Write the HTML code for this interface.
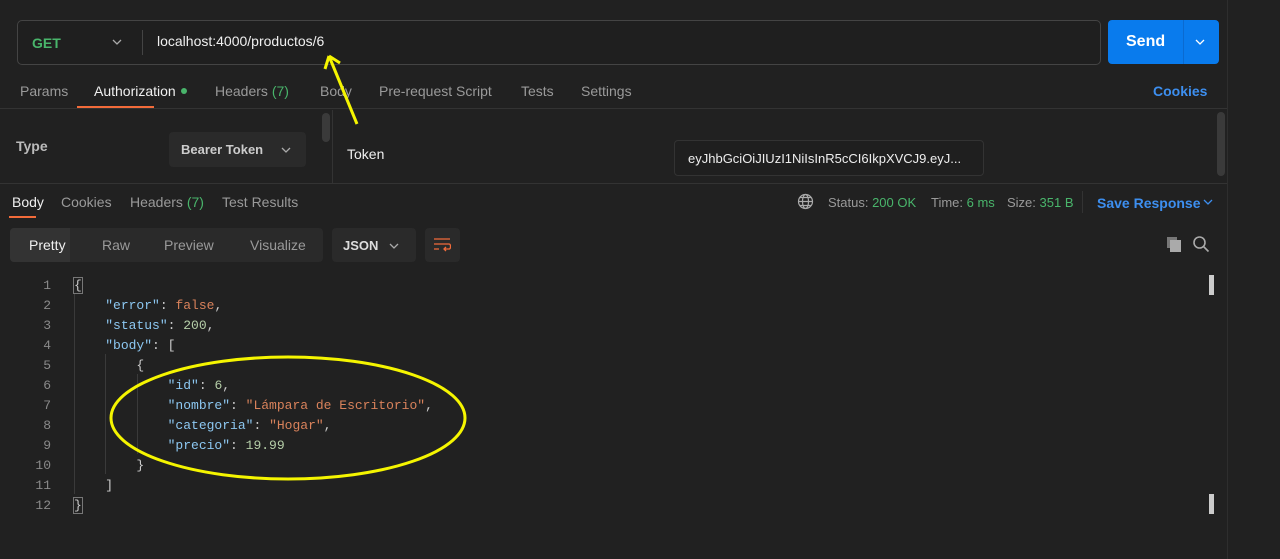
<!DOCTYPE html>
<html><head><meta charset="utf-8"><style>
*{margin:0;padding:0;box-sizing:border-box}
body{width:1280px;height:559px;background:#212121;font-family:"Liberation Sans",sans-serif;color:#e6e6e6;position:relative;overflow:hidden;font-size:13px}
.a{position:absolute;white-space:nowrap}
.g{color:#9a9a9a}
.gr{color:#49b56b}
.bl{color:#3d8ff0}
.code{font-family:"Liberation Mono",monospace;font-size:13px}
.k{color:#8dc8f2}.s{color:#d9825b}.n{color:#b5cea8}.f{color:#d9825b}.p{color:#ccc}
</style></head><body>
<div class="a" style="left:1227px;top:0;width:1px;height:559px;background:#2e2e2e"></div>
<!-- URL bar -->
<div class="a" style="left:17px;top:20px;width:1084px;height:45px;border:1px solid #444;border-radius:5px;background:#1f1f1f"></div>
<div class="a" style="left:32px;top:35px;color:#49b56b;font-weight:bold;font-size:14px">GET</div>
<svg class="a" style="left:111px;top:38px" width="12" height="8"><path d="M2 2l4 4 4-4" stroke="#aaa" fill="none" stroke-width="1.3"/></svg>
<div class="a" style="left:142px;top:30px;width:1px;height:25px;background:#444"></div>
<div class="a" style="left:157px;top:33px;font-size:14px;color:#f0f0f0">localhost:4000/productos/6</div>
<div class="a" style="left:1108px;top:20px;width:111px;height:44px;background:#097bed;border-radius:4px"></div>
<div class="a" style="left:1183px;top:20px;width:1px;height:44px;background:#0a6ad0"></div>
<div class="a" style="left:1126px;top:33px;font-size:16px;font-weight:bold;color:#fff">Send</div>
<svg class="a" style="left:1194px;top:38px" width="12" height="8"><path d="M2 2l4 4 4-4" stroke="#fff" fill="none" stroke-width="1.3"/></svg>
<!-- tabs -->
<div class="a g" style="left:20px;top:83px;font-size:14px">Params</div>
<div class="a" style="left:94px;top:83px;font-size:14px;color:#f0f0f0">Authorization</div>
<div class="a" style="left:181px;top:88px;width:6px;height:6px;border-radius:50%;background:#49b56b"></div>
<div class="a" style="left:77px;top:106px;width:77px;height:2px;background:#f26b3a;left:77px"></div>
<div class="a g" style="left:215px;top:83px;font-size:14px">Headers <span class="gr">(7)</span></div>
<div class="a g" style="left:320px;top:83px;font-size:14px">Body</div>
<div class="a g" style="left:379px;top:83px;font-size:14px">Pre-request Script</div>
<div class="a g" style="left:521px;top:83px;font-size:14px">Tests</div>
<div class="a g" style="left:581px;top:83px;font-size:14px">Settings</div>
<div class="a bl" style="left:1153px;top:83px;font-size:14px;font-weight:bold">Cookies</div>
<div class="a" style="left:0;top:108px;width:1227px;height:1px;background:#333"></div>
<!-- auth -->
<div class="a" style="left:16px;top:138px;font-size:14px;font-weight:bold;color:#bbb">Type</div>
<div class="a" style="left:169px;top:132px;width:137px;height:35px;background:#2a2a2a;border-radius:4px"></div>
<div class="a" style="left:181px;top:142px;color:#ccc;font-weight:bold">Bearer Token</div>
<svg class="a" style="left:280px;top:146px" width="12" height="8"><path d="M2 2l4 4 4-4" stroke="#aaa" fill="none" stroke-width="1.3"/></svg>
<div class="a" style="left:322px;top:113px;width:8px;height:29px;background:#3a3a3a;border-radius:4px"></div>
<div class="a" style="left:332px;top:110px;width:1px;height:73px;background:#333"></div>
<div class="a" style="left:347px;top:146px;font-size:14px;color:#f0f0f0">Token</div>
<div class="a" style="left:674px;top:140px;width:310px;height:36px;border:1px solid #333;border-radius:4px;background:#1f1f1f"></div>
<div class="a" style="left:688px;top:151px;color:#eee">eyJhbGciOiJIUzI1NiIsInR5cCI6IkpXVCJ9.eyJ...</div>
<div class="a" style="left:1217px;top:112px;width:8px;height:64px;background:#3a3a3a;border-radius:4px"></div>
<div class="a" style="left:0;top:183px;width:1227px;height:1px;background:#333"></div>
<!-- response tabs -->
<div class="a" style="left:12px;top:194px;font-size:14px;color:#f0f0f0">Body</div>
<div class="a" style="left:9px;top:216px;width:27px;height:2px;background:#f26b3a"></div>
<div class="a g" style="left:61px;top:194px;font-size:14px">Cookies</div>
<div class="a g" style="left:130px;top:194px;font-size:14px">Headers <span class="gr">(7)</span></div>
<div class="a g" style="left:222px;top:194px;font-size:14px">Test Results</div>
<svg class="a" style="left:797px;top:193px" width="17" height="17" fill="none" stroke="#aaa" stroke-width="1.2"><circle cx="8.5" cy="8.5" r="7"/><ellipse cx="8.5" cy="8.5" rx="3" ry="7"/><path d="M1.5 8.5h14M3 4.5h11M3 12.5h11"/></svg>
<div class="a g" style="left:828px;top:195px">Status: <span class="gr">200 OK</span></div>
<div class="a g" style="left:931px;top:195px">Time: <span class="gr">6 ms</span></div>
<div class="a g" style="left:1007px;top:195px">Size: <span class="gr">351 B</span></div>
<div class="a" style="left:1082px;top:191px;width:1px;height:22px;background:#333"></div>
<div class="a bl" style="left:1097px;top:195px;font-size:14px;font-weight:bold">Save Response</div>
<svg class="a" style="left:1202px;top:198px" width="12" height="8"><path d="M2 2l4 4 4-4" stroke="#3d8ff0" fill="none" stroke-width="1.3"/></svg>
<!-- view toggles -->
<div class="a" style="left:10px;top:228px;width:313px;height:34px;background:#2a2a2a;border-radius:4px"></div>
<div class="a" style="left:10px;top:228px;width:60px;height:34px;background:#333;border-radius:4px 0 0 4px"></div>
<div class="a" style="left:29px;top:237px;font-size:14px;color:#f0f0f0">Pretty</div>
<div class="a g" style="left:102px;top:237px;font-size:14px">Raw</div>
<div class="a g" style="left:164px;top:237px;font-size:14px">Preview</div>
<div class="a g" style="left:250px;top:237px;font-size:14px">Visualize</div>
<div class="a" style="left:332px;top:228px;width:84px;height:34px;background:#2a2a2a;border-radius:4px"></div>
<div class="a" style="left:343px;top:238px;color:#ddd;font-weight:bold">JSON</div>
<svg class="a" style="left:388px;top:242px" width="12" height="8"><path d="M2 2l4 4 4-4" stroke="#aaa" fill="none" stroke-width="1.3"/></svg>
<div class="a" style="left:425px;top:228px;width:35px;height:34px;background:#2a2a2a;border-radius:4px"></div>
<svg class="a" style="left:433px;top:237px" width="18" height="16" fill="none" stroke="#f26b3a" stroke-width="1.3"><path d="M1 2h16M1 7h15c2 0 2 5 0 5h-5M13 10l-2 2 2 2M1 12h5"/></svg>
<svg class="a" style="left:1166px;top:236px" width="18" height="16"><rect x="1" y="1" width="10" height="11" fill="#777"/><rect x="4" y="4" width="11" height="12" fill="#aaa"/></svg>
<svg class="a" style="left:1192px;top:235px" width="18" height="18" fill="none" stroke="#aaa" stroke-width="1.6"><circle cx="7.5" cy="7.5" r="5.5"/><path d="M11.5 11.5l5 5"/></svg>
<div class="a" style="left:1209px;top:275px;width:5px;height:20px;background:#ccc"></div>
<div class="a" style="left:1209px;top:494px;width:5px;height:20px;background:#ccc"></div>
<!-- code -->
<div class="a code g" style="left:0;top:276px;width:51px;text-align:right;line-height:20px;color:#8a8a8a">1<br>2<br>3<br>4<br>5<br>6<br>7<br>8<br>9<br>10<br>11<br>12</div>
<div class="a" style="left:74px;top:294px;width:1px;height:200px;background:#3a3a3a"></div>
<div class="a" style="left:105px;top:354px;width:1px;height:120px;background:#3a3a3a"></div>
<div class="a" style="left:137px;top:374px;width:1px;height:80px;background:#3a3a3a"></div>
<div class="a code p" style="left:74px;top:276px;line-height:20px;white-space:pre"><span style="outline:1px solid #777">{</span>
    <span class="k">"error"</span>: <span class="f">false</span>,
    <span class="k">"status"</span>: <span class="n">200</span>,
    <span class="k">"body"</span>: [
        {
            <span class="k">"id"</span>: <span class="n">6</span>,
            <span class="k">"nombre"</span>: <span class="s">"Lámpara de Escritorio"</span>,
            <span class="k">"categoria"</span>: <span class="s">"Hogar"</span>,
            <span class="k">"precio"</span>: <span class="n">19.99</span>
        }
    ]
<span style="outline:1px solid #777">}</span></div>
<!-- annotations -->
<svg class="a" style="left:0;top:0" width="1280" height="559" fill="none" stroke="#f5f500" stroke-width="3">
<ellipse cx="288" cy="418" rx="177" ry="61"/>
<path d="M357 124L329 56M329 56l-4 13M329 56l11 7"/>
</svg>
</body></html>
